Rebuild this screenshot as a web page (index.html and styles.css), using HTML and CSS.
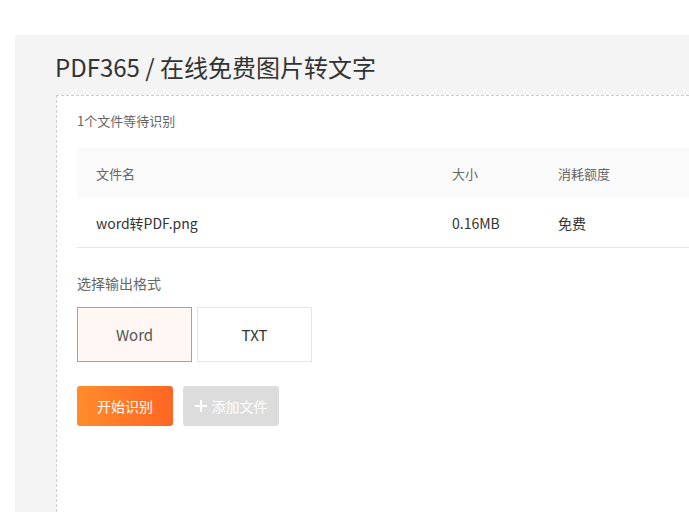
FILE: index.html
```html
<!DOCTYPE html>
<html lang="zh-CN">
  <head>
    <meta charset="UTF-8" />
    <meta name="viewport" content="width=device-width, initial-scale=1.0" />
    <title>PDF365 - 在线免费图片转文字</title>
    <link rel="stylesheet" href="styles.css">
  </head>
  <body>
    <div class="page">
      <div class="panel">
        <h1 class="panel-title">PDF365 / 在线免费图片转文字</h1>

        <div class="upload-box">
          <p class="file-count">1个文件等待识别</p>

          <div class="file-table">
            <div class="file-row file-head">
              <div class="cell">文件名</div>
              <div class="cell">大小</div>
              <div class="cell">消耗额度</div>
            </div>
            <div class="file-row">
              <div class="cell">word转PDF.png</div>
              <div class="cell">0.16MB</div>
              <div class="cell">免费</div>
            </div>
          </div>

          <p class="format-label">选择输出格式</p>
          <div class="format-list">
            <div class="format-item active">Word</div>
            <div class="format-item">TXT</div>
          </div>

          <div class="actions">
            <button class="start-btn">开始识别</button>
            <button class="add-btn">
              <svg class="plus-icon" width="12" height="12" viewBox="0 0 12 12">
                <path d="M6 0v12M0 6h12" stroke="#fff" stroke-width="2" />
              </svg>
              添加文件
            </button>
          </div>
        </div>
      </div>
    </div>
  </body>
</html>
```

FILE: styles.css
```css
* {
  margin: 0;
  padding: 0;
  box-sizing: border-box;
}

html,
body {
  height: 100%;
  overflow: hidden;
}

body {
  font-family: "Noto Sans CJK SC", "Noto Sans", sans-serif;
  background: #fff;
  color: #333;
}

.page {
  height: 100%;
  display: flex;
  flex-direction: column;
  padding-top: 35px;
  padding-left: 15px;
}

.panel {
  flex: 1;
  display: flex;
  flex-direction: column;
  background: #f4f4f4;
  padding: 14px 0 0 40px;
}

.panel-title {
  font-size: 24px;
  font-weight: 400;
  line-height: 36px;
  color: #333;
  margin-bottom: 10px;
}

.upload-box {
  flex: 1;
  margin-left: 1px;
  background: #fff;
  border: 1px dashed #ccc;
  border-right: none;
  border-bottom: none;
  padding: 15px 0 0 20px;
}

.file-count {
  font-size: 13px;
  line-height: 20px;
  color: #666;
  margin-bottom: 17px;
}

.file-row {
  display: grid;
  grid-template-columns: 356px 106px 1fr;
  height: 50px;
  align-items: center;
  font-size: 14px;
  color: #333;
  border-bottom: 1px solid #e8e8e8;
}

.file-head {
  background: #fafafa;
  border-bottom: none;
  font-size: 13px;
  color: #666;
}

.cell {
  padding-left: 19px;
}

.format-label {
  font-size: 14px;
  line-height: 20px;
  color: #666;
  margin-top: 25px;
}

.format-list {
  display: flex;
  gap: 5px;
  margin-top: 14px;
}

.format-item {
  width: 115px;
  height: 55px;
  display: flex;
  align-items: center;
  justify-content: center;
  border: 1px solid #e5e5e5;
  background: #fff;
  font-size: 15px;
  color: #333;
}

.format-item.active {
  border-color: #ff8833;
  background: #fff7f4;
  color: #555;
}

.actions {
  display: flex;
  gap: 10px;
  margin-top: 24px;
}

.start-btn,
.add-btn {
  width: 96px;
  height: 40px;
  border: none;
  border-radius: 3px;
  font-family: inherit;
  font-size: 14px;
  color: #fff;
  display: flex;
  align-items: center;
  justify-content: center;
  cursor: pointer;
}

.start-btn {
  background: linear-gradient(90deg, #ff8c2c 0%, #ff6624 100%);
}

.add-btn {
  background: #dcdcdc;
  gap: 5px;
}
```
